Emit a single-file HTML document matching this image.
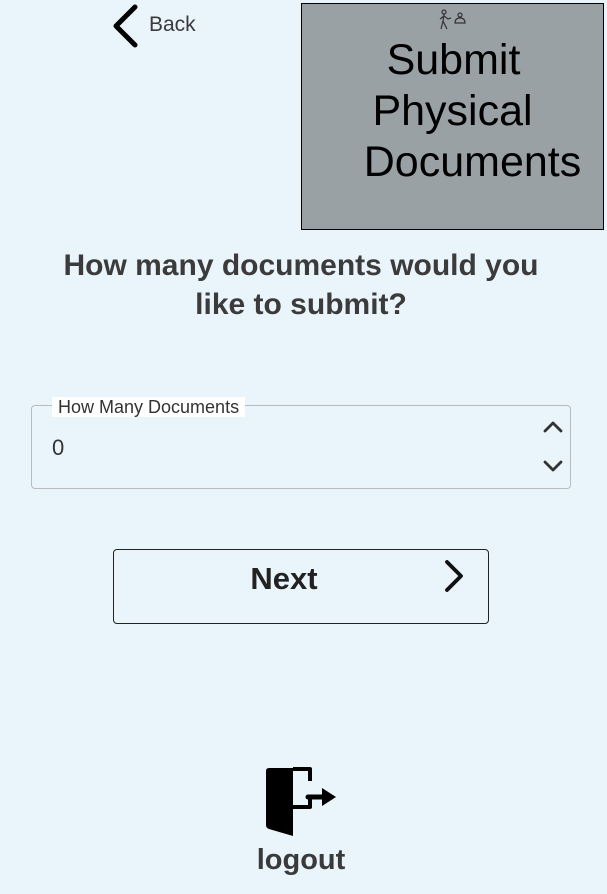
<!DOCTYPE html>
<html><head><style>
body{margin:0;width:607px;height:894px;background:#eaf4fb;font-family:"Liberation Sans",sans-serif;position:relative;overflow:hidden}
.a{position:absolute}
</style></head><body>
<svg class="a" style="left:110px;top:4px" width="30" height="44" viewBox="0 0 30 44"><path d="M25 3 L6 22 L25 41" fill="none" stroke="#000" stroke-width="5" stroke-linecap="round" stroke-linejoin="round"/></svg>
<div class="a" style="left:149px;top:13px;font-size:21px;color:#3a3a3a">Back</div>
<div class="a" style="left:301px;top:3px;width:301px;height:225px;background:#9aa1a4;border:1px solid #000"></div>
<svg class="a" style="left:438px;top:9px" width="30" height="22" viewBox="0 0 30 22"><g fill="none" stroke="#333" stroke-width="1.2"><circle cx="6" cy="3" r="2"/><path d="M6 5 L5 12 L3 20 M5 12 L9 20 M6 7 L10 10 L13 9 M6 7 L2 10"/><circle cx="22" cy="6" r="2"/><path d="M17 14 Q17 9 22 9 Q27 9 27 14 Z"/></g></svg>
<div class="a" style="left:301px;top:35px;width:303px;text-align:center;font-size:43px;line-height:51px;color:#000">
<div style="padding-left:2px">Submit</div><div>Physical</div><div style="padding-left:40px">Documents</div></div>
<div class="a" style="left:0;top:246px;width:602px;text-align:center;font-size:30px;line-height:39px;font-weight:bold;color:#3b3b3b">How many documents would you<br>like to submit?</div>
<div class="a" style="left:31px;top:405px;width:538px;height:82px;border:1px solid #b9bcbf;border-radius:4px"></div>
<div class="a" style="left:52px;top:397px;padding:0 6px;background:#fff;font-size:18px;line-height:20px;color:#333">How Many Documents</div>
<div class="a" style="left:52px;top:435px;font-size:22px;color:#333">0</div>
<svg class="a" style="left:542px;top:418px" width="22" height="58" viewBox="0 0 22 58"><path d="M3 13 L11 5 L19 13 M3 44 L11 52 L19 44" fill="none" stroke="#333" stroke-width="2.8" stroke-linecap="round" stroke-linejoin="round"/></svg>
<div class="a" style="left:113px;top:549px;width:374px;height:73px;border:1px solid #222;border-radius:4px"></div>
<div class="a" style="left:184px;top:561px;width:200px;text-align:center;font-size:31px;font-weight:bold;color:#222">Next</div>
<svg class="a" style="left:440px;top:558px" width="28" height="38" viewBox="0 0 28 38"><path d="M7 4 L21 18 L7 32" fill="none" stroke="#111" stroke-width="3.8" stroke-linecap="round" stroke-linejoin="round"/></svg>
<svg class="a" style="left:263px;top:767px" width="76" height="72" viewBox="0 0 76 72"><path d="M3 4 Q3 1 6 1 L30 1 L30 69 L6 62 Q3 61 3 58 Z" fill="#000"/><path d="M30 2 L47 2 L47 14 M47 28 L47 40 L30 40" fill="none" stroke="#000" stroke-width="4" stroke-linejoin="round"/><path d="M45 30 L60 30" stroke="#000" stroke-width="5" stroke-linecap="round"/><path d="M59 21 L73 30 L59 39 Z" fill="#000"/></svg>
<div class="a" style="left:0;top:844px;width:602px;text-align:center;font-size:29px;font-weight:bold;color:#3a3a3a">logout</div>
</body></html>
